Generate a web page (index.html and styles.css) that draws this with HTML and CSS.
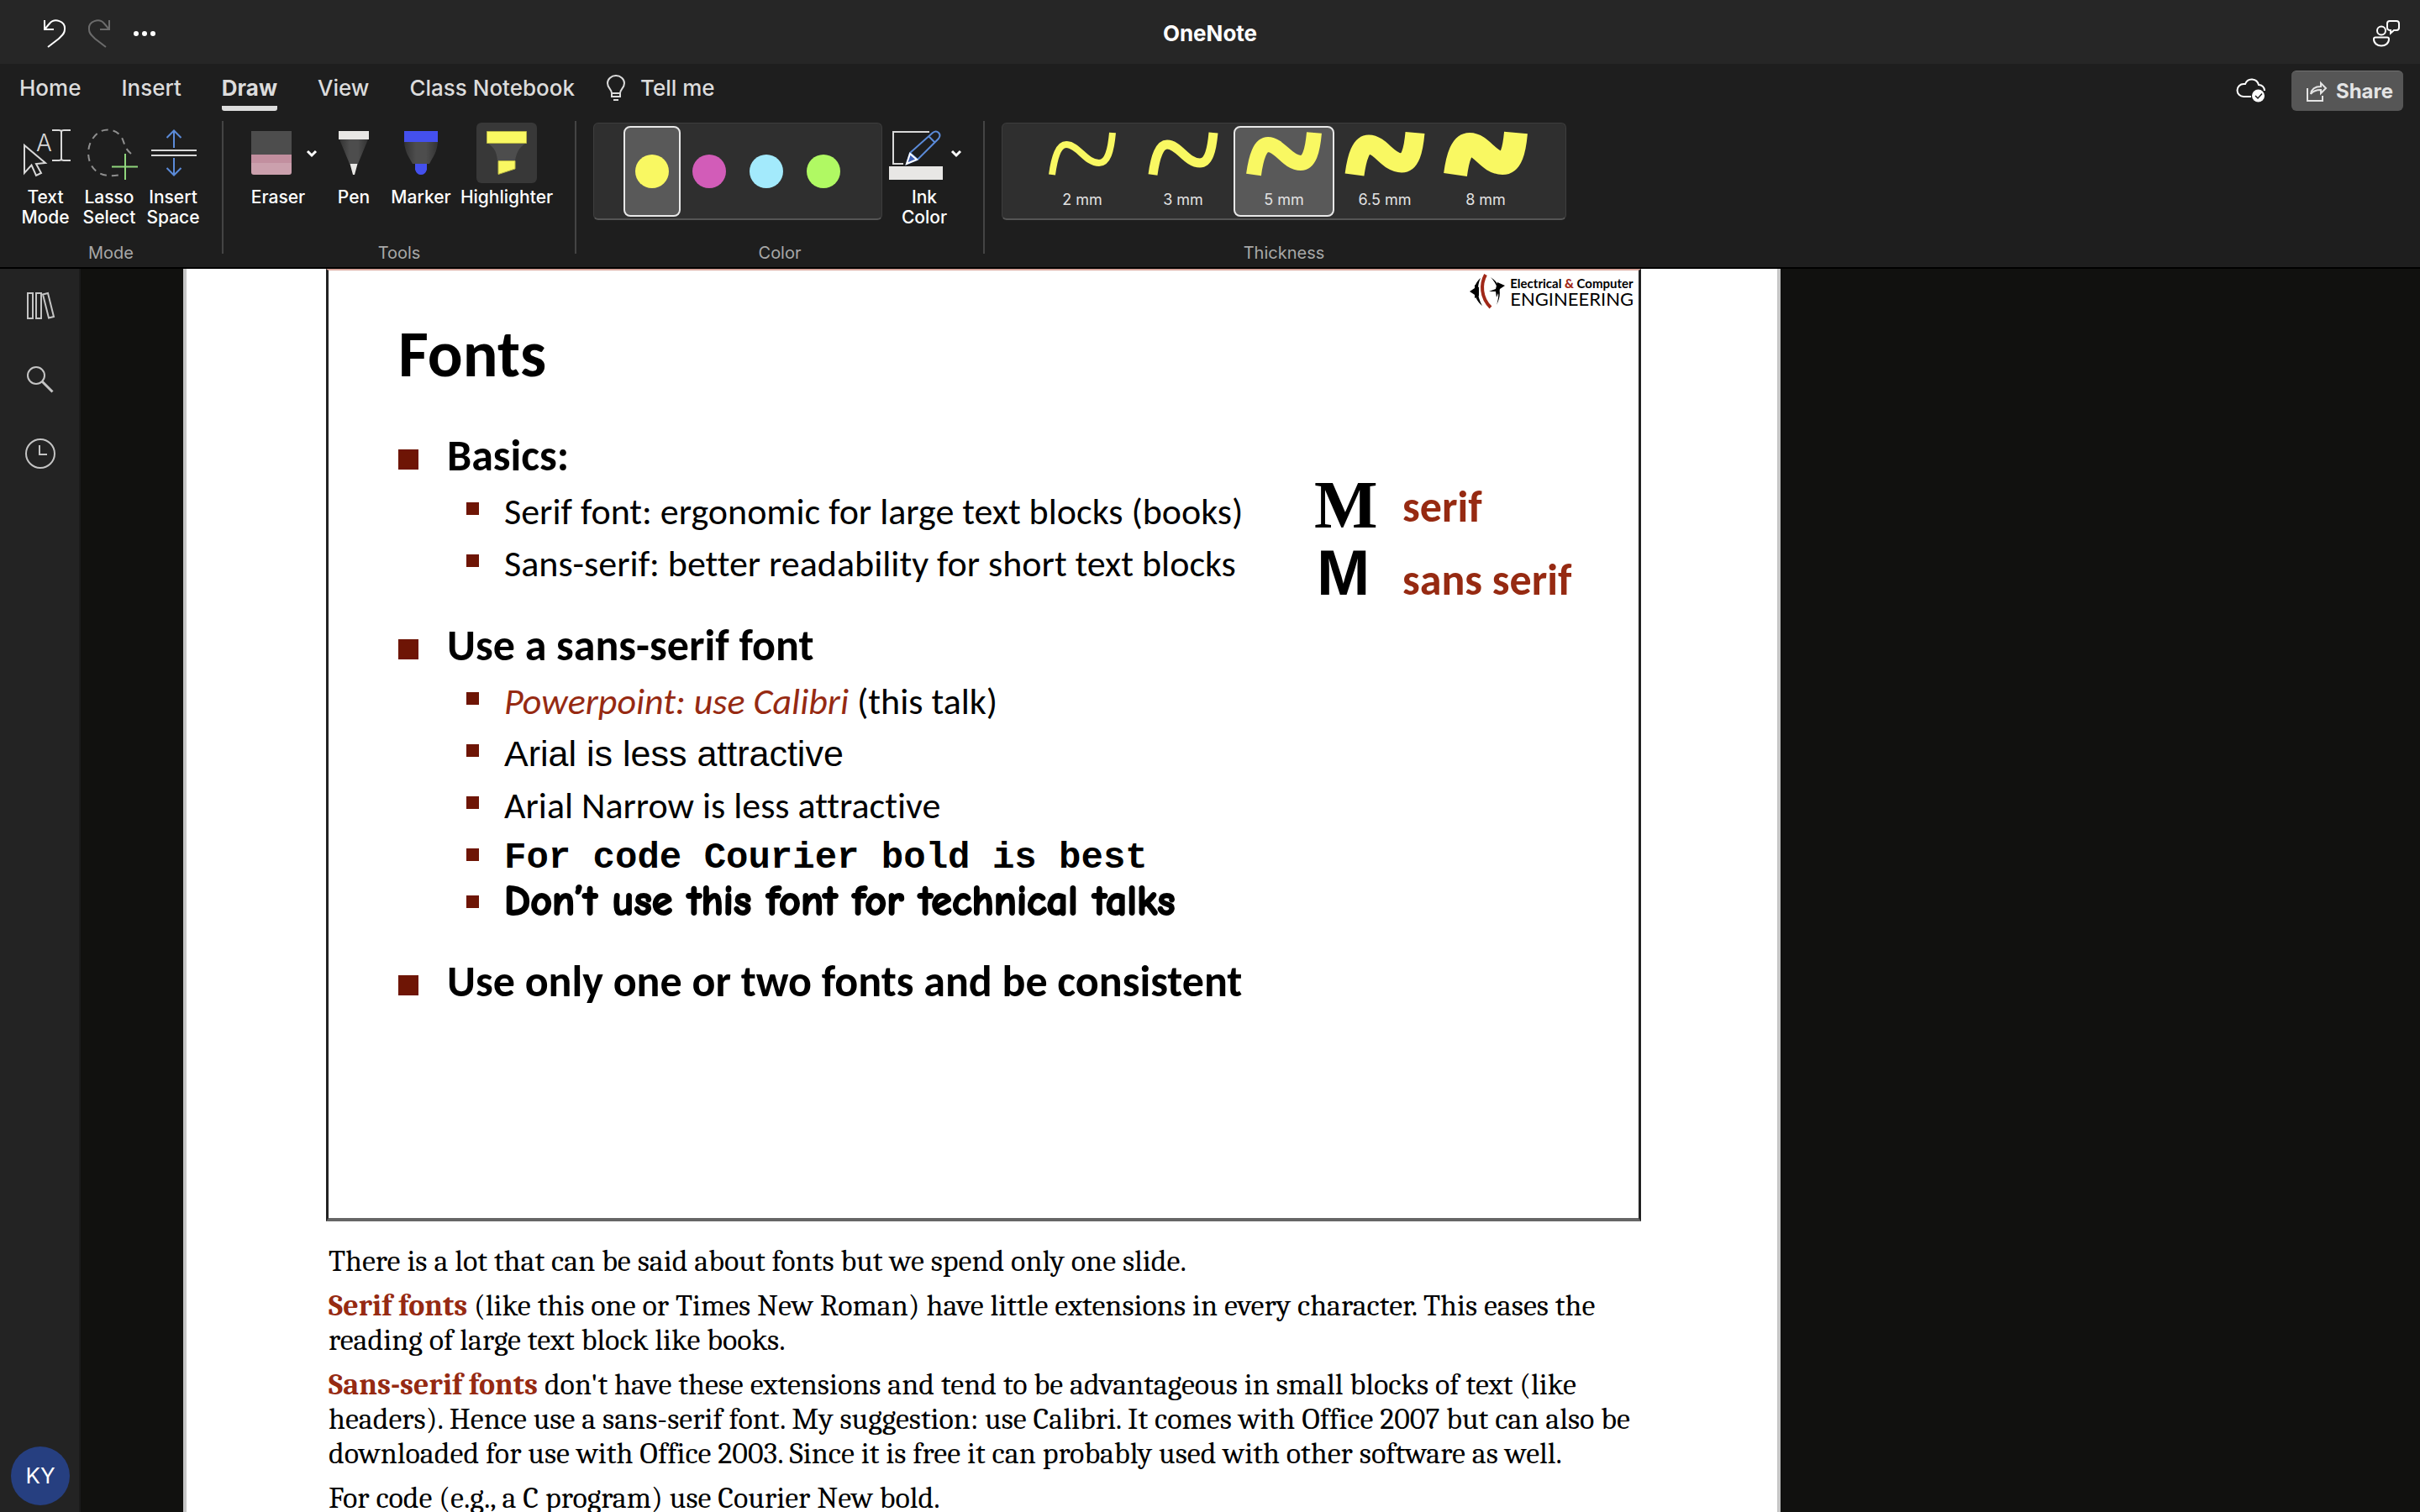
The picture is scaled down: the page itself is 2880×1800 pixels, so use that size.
FILE: index.html
```html
<!DOCTYPE html>
<html lang="en">
<head>
<meta charset="utf-8">
<title>OneNote</title>
<link rel="stylesheet" href="styles.css">
</head>
<body>
<header class="titlebar">
  <div class="quick">
    <button class="icon-btn" aria-label="Undo"><svg width="28" height="34" viewBox="0 0 28 34" class="line"><path d="M2 1v11h11M2 12L8 5c6-7 19-3 18 7c0 5-3 7-7 11L6 33"/></svg></button>
    <button class="icon-btn dim" aria-label="Redo"><svg width="28" height="34" viewBox="0 0 28 34" class="line"><path d="M26 1v11H15M26 12L20 5C14-2 1 2 2 12c0 5 3 7 7 11L22 33"/></svg></button>
    <button class="icon-btn" aria-label="More"><svg width="28" height="34" viewBox="0 0 28 34" fill="currentColor"><circle cx="5" cy="17" r="3"/><circle cx="15" cy="17" r="3"/><circle cx="25" cy="17" r="3"/></svg></button>
  </div>
  <h1 class="app-name">OneNote</h1>
  <div class="title-end">
    <button class="icon-btn" aria-label="Feedback"><svg width="32" height="32" viewBox="0 0 32 32" class="line"><circle cx="10" cy="12.500" r="5"/><path d="M3 20.500h14q2 0 2 2c0 5-4 8-9 8s-9-3-9-8q0-2 2-2zM20 1h8q3 0 3 3v5q0 3-3 3h-3l-4 3.500V12q-4 0-4-3V4q0-3 3-3z"/></svg></button>
  </div>
</header>

<nav class="tabs">
  <button class="tab">Home</button>
  <button class="tab">Insert</button>
  <button class="tab active">Draw</button>
  <button class="tab">View</button>
  <button class="tab">Class Notebook</button>
  <button class="tab tell"><svg width="22" height="32" viewBox="0 0 22 32" class="line"><path d="M6 22c0-5-5-6-5-12a10 9 0 0 1 20 0c0 6-5 7-5 12zM6 22v4h10v-4M8 30h6"/></svg>Tell me</button>
  <div class="tabs-end">
    <button class="icon-btn" aria-label="Saved to cloud"><svg width="36" height="30" viewBox="0 0 36 30"><path class="line" d="M18 22H9A7.500 7.500 0 0 1 9 7h2c3-8 14-7 16 1c4 0 7 3 7 7"/><circle cx="26.500" cy="21" r="7.500" fill="#fff"/><path d="M23 21l3 3l5-5.500" fill="none" stroke="#1e1e1e" stroke-width="1.500"/></svg></button>
    <button class="share"><svg width="26" height="26" viewBox="0 0 26 26" class="line"><path d="M2 9v15h18v-6M6 16c1-7 6-9 12-9V3l6 6l-6 6v-4c-6 0-9 1-12 5z"/></svg>Share</button>
  </div>
</nav>

<section class="ribbon" aria-label="Draw">
  <div class="group">
    <div class="tools mode">
      <button class="tool"><svg width="76" height="72" viewBox="0 0 76 72" class="line pale"><path d="M13 27v33l8.500-9.500L27 63l6-3l-6-11l11-1z"/><path d="M46 9h8q3 0 3 2q0-2 3-2h8M46 45h8q3 0 3-2q0 2 3 2h8M57 11v32"/><text x="27" y="34">A</text></svg><span>Text<br>Mode</span></button>
      <button class="tool"><svg width="76" height="72" viewBox="0 0 76 72" class="line"><path stroke="#8f8f8f" stroke-dasharray="8 6" d="M64 37C54 29 57 21 50 14C43 7 32 7 25 12C13 21 11 36 15 47C20 60 32 66 51 62"/><path stroke="#8fd67c" d="M41 52.500h31M57 37v31"/></svg><span>Lasso<br>Select</span></button>
      <button class="tool"><svg width="76" height="72" viewBox="0 0 76 72" class="line"><path stroke="#d8d8d8" d="M12 33h54M12 39h54"/><path stroke="#5b8bd9" d="M39 30V10M30.500 18l8.500-8.500l8.500 8.500M39 42v20M30.500 54l8.500 8.500l8.500-8.500"/></svg><span>Insert<br>Space</span></button>
    </div>
    <h2 class="group-name">Mode</h2>
  </div>
  <div class="divider"></div>

  <div class="group">
    <div class="tools drawing">
      <button class="tool eraser"><svg width="96" height="72" viewBox="0 0 96 72"><path fill="#4d4d4d" d="M16 10h48v28H16z"/><path fill="#c28f9f" d="M16 38h48v10H16z"/><path fill="#cba0ad" d="M16 48h48v11q0 3-3 3H19q-3 0-3-3z"/><path d="M83 34l5 5l5-5" fill="none" stroke="#fff" stroke-width="3"/></svg><span>Eraser</span></button>
      <button class="tool pen"><svg width="36" height="72" viewBox="0 0 36 72"><defs><linearGradient id="barrel"><stop offset="0" stop-color="#333"/><stop offset=".35" stop-color="#4d4d4d"/><stop offset=".65" stop-color="#4d4d4d"/><stop offset="1" stop-color="#333"/></linearGradient></defs><path fill="url(#barrel)" d="M1 20h34L23 49H13z"/><path fill="#e8e7e5" d="M0 10h36v10H0zM13.500 49h9L19 62h-2z"/></svg><span>Pen</span></button>
      <button class="tool marker"><svg width="40" height="72" viewBox="0 0 40 72"><path fill="url(#barrel)" d="M0 23h40c-1 12-5 17-10 26H10C5 40 1 35 0 23z"/><path fill="#4450ee" d="M0 10h40v13H0zM13 49h14v7q-2 6-7 6t-7-6z"/></svg><span>Marker</span></button>
      <button class="tool highlighter selected"><svg width="72" height="72" viewBox="0 0 72 72"><path fill="#4d4d4d" d="M14 25h44c-8 5-10 11-12 20H25C24 36 22 30 14 25z"/><path fill="#f9f862" stroke="#b8b645" d="M12.500 10.500h47v14h-47zM26 45.500h20V55L26 61.500z"/></svg><span>Highlighter</span></button>
    </div>
    <h2 class="group-name">Tools</h2>
  </div>
  <div class="divider"></div>

  <div class="group">
    <div class="tools color">
      <div class="panel">
        <input type="radio" name="ink" class="swatch yellow" aria-label="Yellow" checked>
        <input type="radio" name="ink" class="swatch pink" aria-label="Pink">
        <input type="radio" name="ink" class="swatch sky" aria-label="Sky blue">
        <input type="radio" name="ink" class="swatch lime" aria-label="Lime">
      </div>
      <button class="tool ink"><svg width="92" height="72" viewBox="0 0 92 72" class="line"><path stroke="#d8d8d8" d="M52 11H9v38h12"/><path stroke="#5b8bd9" d="M25 49l4-13L56 12q4-3 7 0t0 7L38 44zM51 16l8 8M29 36l9 8"/><path fill="#3d5fb4" d="M25 49l4-12l8 7z"/><path fill="#e8e7e5" stroke="none" d="M4 52h64v16H4z"/><path stroke="#fff" stroke-width="3" d="M79 34l5 5l5-5"/></svg><span>Ink<br>Color</span></button>
    </div>
    <h2 class="group-name">Color</h2>
  </div>
  <div class="divider"></div>

  <div class="group">
    <div class="tools thickness">
      <div class="panel">
        <label class="width"><input type="radio" name="width"><svg width="108" height="74" viewBox="-18 -6 108 74"><path stroke-width="8" d="M0 50C3 28 8 14 17 14C31 14 40 36 56 36C66 36 70 22 72 0"/></svg>2 mm</label>
        <label class="width"><input type="radio" name="width"><svg width="108" height="74" viewBox="-18 -6 108 74"><path stroke-width="11" d="M0 50C3 28 8 14 17 14C31 14 40 36 56 36C66 36 70 22 72 0"/></svg>3 mm</label>
        <label class="width"><input type="radio" name="width" checked><svg width="108" height="74" viewBox="-18 -6 108 74"><path stroke-width="18" d="M0 50C3 28 8 14 17 14C31 14 40 36 56 36C66 36 70 22 72 0"/></svg>5 mm</label>
        <label class="width"><input type="radio" name="width"><svg width="108" height="74" viewBox="-18 -6 108 74"><path stroke-width="23" d="M0 50C3 28 8 14 17 14C31 14 40 36 56 36C66 36 70 22 72 0"/></svg>6.5 mm</label>
        <label class="width"><input type="radio" name="width"><svg width="108" height="74" viewBox="-18 -6 108 74"><path stroke-width="28" d="M0 50C3 28 8 14 17 14C31 14 40 36 56 36C66 36 70 22 72 0"/></svg>8 mm</label>
      </div>
    </div>
    <h2 class="group-name">Thickness</h2>
  </div>
</section>

<div class="workspace">
  <aside class="rail">
    <button class="icon-btn" aria-label="Notebooks"><svg width="36" height="36" viewBox="0 0 36 36" class="line"><path d="M3 3h6v30H3zM13 3h6v30h-6zM21 4.500l6-1.500l7 28l-6 1.500z"/></svg></button>
    <button class="icon-btn" aria-label="Search"><svg width="36" height="36" viewBox="0 0 36 36" class="line"><circle cx="13" cy="13" r="10"/><path stroke-width="3" d="M20 20l12.500 12.500"/></svg></button>
    <button class="icon-btn" aria-label="Recent"><svg width="36" height="36" viewBox="0 0 36 36" class="line"><circle cx="18" cy="18" r="17"/><path d="M17 8v11h9"/></svg></button>
    <button class="avatar">KY</button>
  </aside>

  <main class="canvas">
    <article class="page">
      <section class="slide">
        <div class="brand">
          <svg width="42" height="42" viewBox="0 0 42 42"><path d="M13 5C3 13 3 28 15 38C9 28 8 16 13 5zM25 4c13 8 13 22 7 33c4-12 3-22-7-33z"/><path d="M0 21l6-4v-4l5 3v10l-5 3v-4zM42 14l-9-4l-2 8l-8 3h8l1 7l4-10z"/><path d="M19 1C13 12 13 28 25 40" fill="none" stroke="#a02818" stroke-width="4"/></svg>
          <div class="brand-text"><div class="brand-top">Electrical <b>&amp;</b> Computer</div><div class="brand-main">ENGINEERING</div></div>
        </div>
        <h2 class="slide-title">Fonts</h2>
        <div class="slide-body">
          <ul class="points">
            <li><strong>Basics:</strong>
              <ul>
                <li>Serif font: ergonomic for large text blocks (books)</li>
                <li>Sans-serif: better readability for short text blocks</li>
              </ul>
            </li>
            <li><strong>Use a sans-serif font</strong>
              <ul>
                <li><em>Powerpoint: use Calibri</em> (this talk)</li>
                <li><span class="arial">Arial is less attractive</span></li>
                <li>Arial Narrow is less attractive</li>
                <li class="tight"><code>For code Courier bold is best</code></li>
                <li class="tight"><span class="comic">Don’t use this font for technical talks</span></li>
              </ul>
            </li>
            <li><strong>Use only one or two fonts and be consistent</strong></li>
          </ul>
          <div class="samples">
            <span class="m-serif">M</span><span class="word">serif</span>
            <div class="pair"><span class="m-sans">M</span><span class="word">sans serif</span></div>
          </div>
        </div>
      </section>
      <div class="notes">
        <p>There is a lot that can be said about fonts but we spend only one slide.</p>
        <p><b>Serif fonts</b> (like this one or Times New Roman) have little extensions in every character. This eases the<br>reading of large text block like books.</p>
        <p><b>Sans-serif fonts</b> don't have these extensions and tend to be advantageous in small blocks of text (like<br>headers). Hence use a sans-serif font. My suggestion: use Calibri. It comes with Office 2007 but can also be<br>downloaded for use with Office 2003. Since it is free it can probably used with other software as well.</p>
        <p>For code (e.g., a C program) use Courier New bold.</p>
      </div>
    </article>
  </main>
</div>
</body>
</html>
```

FILE: styles.css
```css
* { box-sizing: border-box; }
body {
  margin: 0;
  height: 100vh;
  overflow: hidden;
  display: flex;
  flex-direction: column;
  background: #1e1e1e;
  color: #fff;
  font-family: Inter, "Liberation Sans", sans-serif;
}
h1, h2, p, ul { margin: 0; padding: 0; }
ul { list-style: none; }
button {
  margin: 0;
  padding: 0;
  border: 0;
  background: none;
  color: inherit;
  font: inherit;
}
svg { display: block; flex: none; }
.line { fill: none; stroke: currentColor; stroke-width: 2; }

/* Title bar */
.titlebar {
  display: grid;
  grid-template-columns: 1fr auto 1fr;
  align-items: center;
  height: 76px;
  padding: 4px 24px 0;
  background: #262626;
}
.quick { display: flex; gap: 25px; padding-left: 27px; }
.dim { color: #6b6b6b; }
.app-name { font-size: 26px; line-height: 32px; font-weight: 700; }
.title-end { display: flex; justify-content: flex-end; }

/* Tabs */
.tabs {
  display: flex;
  align-items: flex-start;
  gap: 48px;
  height: 68px;
  padding: 8px 20px 0 23px;
  color: #dcdcdc;
  font-size: 26px;
  line-height: 42px;
  font-weight: 500;
}
.tab.active { font-weight: 700; border-bottom: 6px solid #dcdcdc; border-radius: 3px; }
.tell { display: flex; align-items: center; gap: 18px; margin-left: -10px; }
.tabs-end { display: flex; align-items: center; gap: 30px; margin-left: auto; color: #fff; }
.share {
  display: flex;
  align-items: center;
  gap: 10px;
  height: 48px;
  padding: 0 12px 0 17px;
  border-top: 1px solid #707070;
  border-radius: 6px;
  background: #565656;
  color: #e4e4e4;
  font-size: 24px;
  font-weight: 700;
}

/* Ribbon */
.ribbon { display: flex; height: 176px; border-bottom: 2px solid #000; }
.group { display: flex; flex-direction: column; justify-content: space-between; padding: 2px 0 5px; }
.divider { width: 2px; height: 158px; background: #444; }
.tools { display: flex; }
.mode { padding: 0 20px 0 16px; }
.drawing { padding: 0 17px; }
.color { padding: 0 24px 0 20px; gap: 4px; }
.thickness { padding: 0 20px; }
.group-name { color: #a8a8a8; font-size: 20px; line-height: 24px; font-weight: 400; text-align: center; }
.tool {
  display: flex;
  flex-direction: column;
  align-items: center;
  gap: 5px;
  width: 76px;
  font-size: 21px;
  line-height: 24px;
  font-weight: 500;
}
.tool text { font-size: 28px; font-weight: 300; fill: #d8d8d8; stroke: none; }
.pale { color: #d8d8d8; }
.eraser { width: 96px; }
.pen { width: 84px; }
.highlighter { width: 128px; }
.ink { width: 92px; }
.selected svg { border-radius: 6px; background: #383838; }
.panel {
  display: flex;
  height: 116px;
  padding: 3px 35px;
  border: 1px solid #3d3d3d;
  border-bottom: 2px solid #555;
  border-radius: 6px;
  background: #2f2f2f;
}
.swatch {
  appearance: none;
  display: grid;
  place-items: center;
  width: 68px;
  height: 108px;
  margin: 0;
  border: 2px solid transparent;
  border-radius: 8px;
}
.swatch::before { content: ""; width: 40px; height: 40px; border-radius: 50%; background: currentColor; }
.swatch:checked, .width:has(:checked) { border-color: #e8e8e8; background: #595959; }
.yellow { color: #f9f862; }
.pink { color: #d25cb8; }
.sky { color: #a3eafc; }
.lime { color: #b0f963; }
.width {
  display: flex;
  flex-direction: column;
  align-items: center;
  width: 120px;
  height: 108px;
  border: 2px solid transparent;
  border-radius: 8px;
  color: #e2e2e2;
  font-size: 18px;
  line-height: 24px;
}
.width input { appearance: none; width: 0; height: 0; margin: 0; }
.width svg { fill: none; stroke: #f9f862; }

/* Workspace */
.workspace { display: flex; flex: 1; min-height: 0; }
.rail {
  display: flex;
  flex-direction: column;
  align-items: center;
  gap: 52px;
  width: 96px;
  padding: 26px 0 8px 2px;
  border-right: 2px solid #1a1a1a;
  background: #232323;
  color: #c4c4c4;
}
.avatar {
  width: 70px;
  height: 70px;
  margin-top: auto;
  border-radius: 50%;
  background: #263f80;
  color: #fff;
  font-size: 26px;
  line-height: 70px;
}
.canvas { flex: 1; overflow: hidden; padding-left: 122px; background: #11110f; }
.page {
  max-width: 1901px;
  min-height: 100%;
  padding: 0 162px 0 166px;
  border: solid #c6c6c6;
  border-width: 0 4px;
  background: #fff;
  color: #000;
}

/* Slide */
.slide {
  min-height: 1134px;
  padding: 4px 0 0 83px;
  border: 3px solid #222;
  border-top: 2px solid #d9a79d;
  border-bottom: 4px solid #666;
  font-family: Calibri, Carlito, Lato, sans-serif;
  font-variant-ligatures: none;
}
.brand {
  display: flex;
  justify-content: flex-end;
  align-items: center;
  gap: 6px;
  height: 42px;
  padding-right: 6px;
  font-family: Lato, sans-serif;
}
.brand-top { font-size: 15px; line-height: 18px; font-weight: 700; }
.brand-top b { color: #a02818; }
.brand-main { font-size: 22px; line-height: 20px; }
.slide-title { margin-top: 12px; font-size: 78px; line-height: 84px; font-weight: 700; }
.slide-body { display: grid; grid-template-columns: 1fr 308px; padding: 47px 78px 0 0; }
.points > li { margin-bottom: 35px; padding-left: 58px; }
.points strong { display: block; font-size: 52px; line-height: 62px; font-weight: 700; }
.points strong::before {
  content: "";
  float: left;
  width: 24px;
  height: 24px;
  margin: 24px 0 0 -58px;
  background: #6e1505;
}
.points ul { margin-top: 5px; padding-left: 68px; font-size: 44px; line-height: 62px; white-space: nowrap; }
.points ul li::before {
  content: "";
  float: left;
  width: 15px;
  height: 15px;
  margin: 20px 0 0 -45px;
  background: #6e1505;
}
.points em { color: #962a12; }
.points .tight { line-height: 56px; }
.arial, code, .comic { line-height: 1; }
.arial { font-family: "Liberation Sans", sans-serif; font-size: 43px; }
code { font-family: "Liberation Mono", monospace; font-size: 44px; font-weight: 700; }
.comic {
  font-family: "Comic Neue", "Comic Sans MS", Lato, sans-serif;
  font-size: 50px;
  font-weight: 700;
  -webkit-text-stroke: 2px #000;
}
.samples {
  display: grid;
  grid-template-columns: 105px 1fr;
  grid-auto-rows: 80px;
  align-content: start;
  gap: 1px 0;
  padding-top: 50px;
  line-height: 80px;
}
.pair { display: grid; grid-column: 1 / -1; grid-template-columns: 105px 1fr; align-items: baseline; }
.m-serif { font-family: "Liberation Serif", serif; font-size: 80px; font-weight: 700; }
.m-sans { padding-left: 3px; font-family: "Liberation Sans", sans-serif; font-size: 76px; font-weight: 700; }
.word { color: #962a12; font-size: 52px; line-height: 84px; font-weight: 700; white-space: nowrap; }

/* Notes below the slide */
.notes {
  display: grid;
  gap: 12px;
  padding: 27px 0 0 3px;
  font-family: Cambria, Caladea, "Liberation Serif", serif;
  font-size: 36px;
  line-height: 41px;
  white-space: nowrap;
}
.notes b { color: #962a12; }
```
